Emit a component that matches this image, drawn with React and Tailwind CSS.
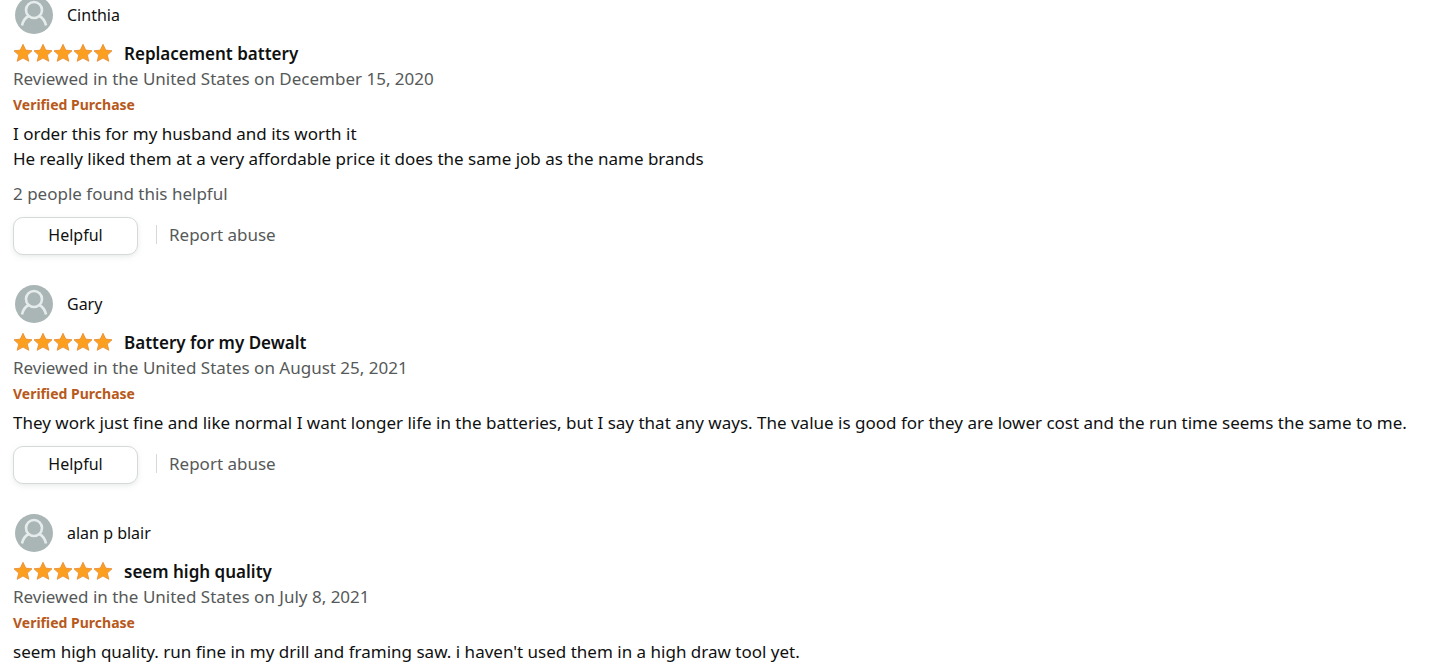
const reviews = [
    {
        name: 'Cinthia',
        title: 'Replacement battery',
        date: 'December 15, 2020',
        body: ['I order this for my husband and its worth it', 'He really liked them at a very affordable price it does the same job as the name brands'],
        helpful: '2 people found this helpful',
        actions: true,
    },
    {
        name: 'Gary',
        title: 'Battery for my Dewalt',
        date: 'August 25, 2021',
        body: ['They work just fine and like normal I want longer life in the batteries, but I say that any ways. The value is good for they are lower cost and the run time seems the same to me.'],
        actions: true,
    },
    {
        name: 'alan p blair',
        title: 'seem high quality',
        date: 'July 8, 2021',
        body: ["seem high quality. run fine in my drill and framing saw. i haven't used them in a high draw tool yet."],
    },
];

function Avatar() {
    return (
        <svg viewBox="0 0 38 38" className="size-[38px] shrink-0" aria-hidden="true">
            <circle cx="19" cy="19" r="19" fill="#a9b6b5" />
            <g fill="none" stroke="#e6ebeb" strokeWidth="2.6">
                <circle cx="19" cy="14" r="8" />
                <path d="M7 29.500C8 25 10.500 21.500 14 20M31 29.500C30 25 27.500 21.500 24 20" />
            </g>
        </svg>
    );
}

function Stars() {
    return (
        <div className="flex pb-[2px]" role="img" aria-label="5 out of 5 stars">
            {[1, 2, 3, 4, 5].map((star) => (
                <svg key={star} viewBox="0 0 20 20" className="size-5" aria-hidden="true">
                    <path
                        d="M10 1.300l2.700 5.800 6.300.7-4.700 4.300 1.500 6.200-5.800-3.300-5.800 3.300 1.500-6.200L1 7.800l6.300-.7z"
                        fill="#fd9f1e"
                        stroke="#e8913c"
                        strokeWidth="0.9"
                        strokeLinejoin="round"
                    />
                </svg>
            ))}
        </div>
    );
}

function Review({ review }) {
    return (
        <article>
            <div className="flex h-[38px] items-center gap-[14px] pl-[2px]">
                <Avatar />
                <span className="text-[16px]">{review.name}</span>
            </div>
            <div className="mt-[7px] flex h-[25px] items-center gap-[11px]">
                <Stars />
                <h3 className="text-[17px] font-semibold">{review.title}</h3>
            </div>
            <p className="text-[#565959]">Reviewed in the United States on {review.date}</p>
            <p className="pt-px text-[14px] leading-[26px] font-bold text-[#b8591b]">Verified Purchase</p>
            <div className="mt-[3px]">
                {review.body.map((line) => (
                    <p key={line}>{line}</p>
                ))}
            </div>
            {review.helpful && <p className="mt-[10px] text-[#565959]">{review.helpful}</p>}
            {review.actions && (
                <div className="mt-[11px] flex items-center">
                    <button
                        type="button"
                        className="h-[38px] w-[125px] rounded-[10px] border border-[#d5d9d9] bg-white pb-[2px] text-[16px] shadow-[0_2px_5px_rgba(213,217,217,0.5)]"
                    >
                        Helpful
                    </button>
                    <div className="ml-[18px] flex items-center pb-[3px]">
                        <span className="h-[19px] w-px bg-[#d5d9d9]" />
                        <a href="#report" className="ml-[12px] text-[#565959]">Report abuse</a>
                    </div>
                </div>
            )}
        </article>
    );
}

function App() {
    return (
        <main className="bg-white px-[13px] font-['Noto_Sans',sans-serif] text-[17px] leading-[25px] text-[#0f1111]">
            <div className="-mt-[4px] flex flex-col gap-[30px]">
                {reviews.map((review) => (
                    <Review key={review.name} review={review} />
                ))}
            </div>
        </main>
    );
}

export default App;
